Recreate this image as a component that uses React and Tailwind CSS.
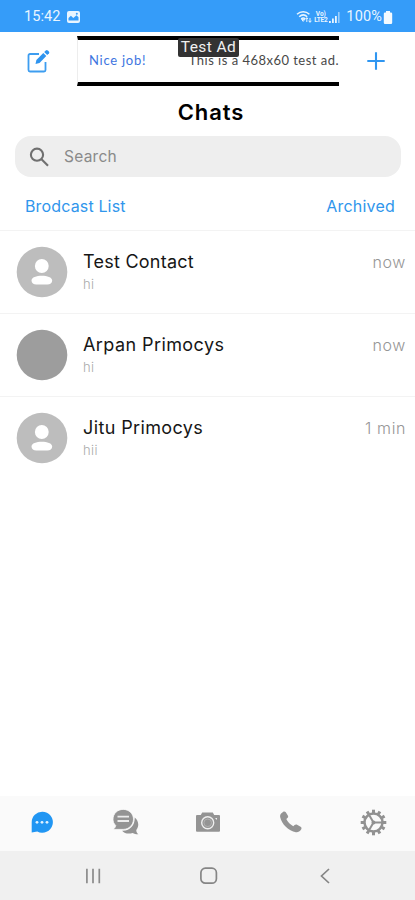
import React from "react";

const chats = [
  { name: "Test Contact", nameClass: "tracking-[0.25px]", text: "hi", time: "now", photo: false },
  { name: "Arpan Primocys", nameClass: "tracking-[0.42px]", text: "hi", time: "now", photo: true },
  { name: "Jitu Primocys", nameClass: "tracking-[0.38px]", text: "hii", time: "1 min", photo: false },
];

const teeth = [0, 30, 60, 90, 120, 150, 180, 210, 240, 270, 300, 330];
const spokes = [60, 180, 300];

function StatusBar() {
  return (
    <div className="flex h-8 shrink-0 items-center justify-between bg-[#359cf9] pl-6 pr-[22px] pt-[2px] font-[Roboto,sans-serif] text-[14.5px] text-[#e9f5ff]">
      <div className="flex items-center gap-[6px]">
        <span className="tracking-[0.1px]">15:42</span>
        <svg width="13" height="12" viewBox="0 0 13 12">
          <rect width="13" height="12" rx="2" fill="#e9f5ff" />
          <path d="M1.5 9.5V7l2.4-2.2L6.3 7l3.2-2.7 2 2v3.2Z" fill="#359cf9" />
          <circle cx="9.8" cy="2.8" r="1" fill="#359cf9" />
        </svg>
      </div>
      <div className="flex items-center">
        <svg width="17" height="14" viewBox="0 0 17 14" fill="none" stroke="#e9f5ff" strokeWidth="1.5">
          <path d="M1 4.2C4.6 .8 9.8.8 13.4 4.2M3.2 6.7c2.4-2.2 5.6-2.2 8 0M5.2 8.9c1.3-1.1 2.7-1.1 4 0" />
          <path d="m5.700 9.400 1.500 2 1.500-2ZM10.800 12V7.800m-1.500 1.500 1.500-1.600L12 9m2-1v4.200m-1.400-1.500 1.400 1.600 1.500-1.600" strokeWidth="1" />
        </svg>
        <div className="flex w-[15px] flex-col items-center text-[6.5px] font-bold leading-[6.5px]">
          <span>Vo)</span>
          <span className="tracking-[-0.3px]">LTE2</span>
        </div>
        <svg className="ml-px mr-[5px]" width="12" height="12" viewBox="0 0 12 12" fill="#e9f5ff">
          <path d="M0 10h1.800v2H0ZM3 7.500h1.800V12H3ZM6 5h1.800v7H6Z" />
          <path d="M9 1h1.600v11H9Z" opacity=".55" />
        </svg>
        <span className="tracking-[0.15px]">100%</span>
        <svg className="ml-px" width="10" height="13" viewBox="0 0 10 13" fill="#f4faff">
          <path d="M3 0h4v1.500h1A1.200 1.200 0 0 1 9.200 2.700v9A1.300 1.300 0 0 1 8 13H2A1.300 1.300 0 0 1 .8 11.700v-9A1.200 1.200 0 0 1 2 1.500h1Z" />
        </svg>
      </div>
    </div>
  );
}

function Header() {
  return (
    <div className="flex h-[60px] shrink-0 items-start">
      <svg className="ml-[26px] mt-[17px]" width="25" height="24" viewBox="0 0 25 24">
        <path d="M13 5H4A1.500 1.500 0 0 0 2.500 6.500V21a1.500 1.500 0 0 0 1.500 1.500H18a1.500 1.500 0 0 0 1.500-1.500v-8" fill="none" stroke="#3d9df0" strokeWidth="1.800" />
        <path d="m9.500 14.900.9-4L17.300 4l3 3-6.800 6.900Z" fill="#2e94ef" />
        <path d="m18.200 3.100 1.700-1.700a1.300 1.300 0 0 1 1.800 0l1.200 1.200a1.300 1.300 0 0 1 0 1.800l-1.700 1.700Z" fill="#2e94ef" />
      </svg>
      <div className="relative ml-[26px] mt-[4px] flex h-[50px] w-[262px] items-center justify-between border-y-4 border-l border-y-black border-l-[#ededed] pl-[11px] font-[Lato,sans-serif] text-[13px]">
        <span className="tracking-[0.75px] text-[#3d75df]">Nice job!</span>
        <span className="tracking-[0.48px] text-[#484848]">This is a 468x60 test ad.</span>
        <div className="absolute left-[100px] top-[-2px] flex h-[19px] w-[61px] items-center justify-center rounded-[2px] bg-[#333] font-[Roboto,sans-serif] text-[15.500px] tracking-[0.4px] text-[#f1f1f1]">
          Test Ad
        </div>
      </div>
      <svg className="ml-7 mt-5" width="18" height="18" viewBox="0 0 18 18">
        <path d="M9 .3v17.400M.3 9h17.400" stroke="#2f96f1" strokeWidth="2.100" />
      </svg>
    </div>
  );
}

function Avatar({ photo }) {
  return (
    <svg className="ml-4 mt-[15px] shrink-0" width="52" height="52" viewBox="0 0 52 52">
      <circle cx="26" cy="26" r="25.300" fill={photo ? "#9d9d9d" : "#bdbdbd"} />
      {!photo && (
        <g fill="#fff">
          <circle cx="25.800" cy="20" r="6.900" />
          <path d="M15.500 34.500c0-3.300 5-4.800 10.300-4.800s10.400 1.500 10.400 4.800c0 2.800-2.200 4-4.800 4H20.300c-2.600 0-4.800-1.200-4.800-4Z" />
        </g>
      )}
    </svg>
  );
}

function ChatRow({ chat }) {
  return (
    <li className="flex h-[83px] border-t border-[#f3f3f3]">
      <Avatar photo={chat.photo} />
      <div className="ml-[15px] flex flex-1 flex-col pt-[18px]">
        <span className={"text-[18px] leading-[26px] text-[#161616] " + chat.nameClass}>{chat.name}</span>
        <span className="text-[13px] font-light leading-[18px] tracking-[0.4px] text-[#aaa]">{chat.text}</span>
      </div>
      <span className="mr-[9px] pt-[20px] text-[16px] font-light leading-[22px] tracking-[0.6px] text-[#969696]">{chat.time}</span>
    </li>
  );
}

function TabBar() {
  return (
    <nav className="grid h-[55px] shrink-0 grid-cols-5 place-items-center bg-[#fafafa] pb-[3px]">
      <svg width="26" height="26" viewBox="0 0 26 26">
        <path d="M13.300 2.700a10.500 10.500 0 1 1-5 19.700l-5.600 1v-10.200A10.500 10.500 0 0 1 13.300 2.700Z" fill="#2196f3" />
        <g fill="#e1f2ff">
          <circle cx="8" cy="13.300" r="1.400" />
          <circle cx="13" cy="13.300" r="1.400" />
          <circle cx="18" cy="13.300" r="1.400" />
        </g>
      </svg>
      <svg width="28" height="28" viewBox="0 0 28 28">
        <path d="M23.700 9.500c4.200 3.200 4.600 9 1.600 12.500-.1 1.900.7 3.200 2.100 4.300-2.100.1-4.100-.4-5.800-1.300-4.300 1.400-8.300.3-10.500-2.300 8 .5 13-5.500 12.600-13.200Z" fill="#949494" />
        <path d="M12.200 1.400c5.700 0 10.300 4.200 10.300 9.800s-4.600 10.200-10.300 10.200H2c1.500-1 2.500-2.200 2.700-4C2.700 15.700 2 13.600 2 11.200c0-5.600 4.500-9.800 10.200-9.800Z" fill="#949494" stroke="#fafafa" strokeWidth=".8" />
        <path d="M6.500 8.600h11.500M6.500 13h11.500" stroke="#ececec" strokeWidth="1.900" />
      </svg>
      <svg width="26" height="26" viewBox="0 0 26 26">
        <path d="M2 6h3.800l1.400-2.500h10.600L19.200 6H24a1 1 0 0 1 1 1v14.700a1 1 0 0 1-1 1H2a1 1 0 0 1-1-1V7a1 1 0 0 1 1-1Z" fill="#949494" />
        <circle cx="12.700" cy="13.800" r="6" fill="none" stroke="#efefef" strokeWidth="1.400" />
        <circle cx="12.700" cy="13.800" r="3.800" fill="none" stroke="#b8b8b8" strokeWidth=".8" />
        <path d="m20 9 2 2v-2Z" fill="#efefef" />
      </svg>
      <svg width="26" height="26" viewBox="0 0 26 26">
        <path d="M3.100 4.500 5 2.900c1-.7 2.100-.5 2.800.4l2 3.100c.6.900.5 2-.4 2.700L8.300 10.100c1.600 3.200 4 5.600 7 7.200l1.300-1.200c.8-.7 1.600-.8 2.500-.3l3.500 2c1 .6 1.200 1.700.5 2.700-1.400 1.900-3.200 3.100-5.200 2.700C10.500 21.900 3.700 15.200 2.200 8.300 1.900 6.800 2.200 5.400 3.100 4.500Z" fill="#949494" />
      </svg>
      <svg width="27" height="27" viewBox="-13.500 -13.500 27 27" fill="none" stroke="#919191">
        <circle r="9" strokeWidth="2.500" />
        {teeth.map((angle) => (
          <path key={angle} d="M0-9.500V-12.800" strokeWidth="3" transform={`rotate(${angle})`} />
        ))}
        {spokes.map((angle) => (
          <path key={angle} d="M0 0H8.500" strokeWidth="2" transform={`rotate(${angle + 60})`} />
        ))}
        <circle r="2" fill="#919191" stroke="none" />
      </svg>
    </nav>
  );
}

function SystemNav() {
  return (
    <div className="flex h-[49px] shrink-0 items-center justify-between bg-[#f0f0f0] pl-[84px] pr-[81px]">
      <svg width="18" height="18" viewBox="0 0 18 18">
        <path d="M2.900 1.800v14.500M9 1.800v14.500M15.300 1.800v14.500" stroke="#8b8b8b" strokeWidth="1.700" />
      </svg>
      <svg width="18" height="18" viewBox="0 0 18 18">
        <rect x=".9" y="1.200" width="15.500" height="15" rx="4.500" fill="none" stroke="#858585" strokeWidth="1.700" />
      </svg>
      <svg width="18" height="18" viewBox="0 0 18 18">
        <path d="m13 2-7.500 7 7.500 7" fill="none" stroke="#858585" strokeWidth="1.700" />
      </svg>
    </div>
  );
}

export default function App() {
  return (
    <div className="flex h-[900px] w-[415px] flex-col overflow-hidden bg-white font-[Inter,sans-serif]">
      <StatusBar />
      <Header />
      <h1 className="h-11 shrink-0 pl-[7px] text-center text-[22px] font-semibold leading-[40px] tracking-[0.9px] text-black">Chats</h1>
      <div className="ml-[15px] flex h-[41px] w-[386px] shrink-0 items-center rounded-[16px] bg-[#eee] pl-[14px]">
        <svg width="20" height="20" viewBox="0 0 20 20" fill="none" stroke="#707070" strokeWidth="2.100">
          <circle cx="8" cy="7.700" r="6.100" />
          <path d="m12.500 12.200 6.500 6.500" />
        </svg>
        <span className="ml-[15px] text-[15.500px] tracking-[0.25px] text-[#8a8a8a]">Search</span>
      </div>
      <div className="flex h-[53px] shrink-0 items-center justify-between pl-[25px] pr-5 pt-[5px] text-[16px] text-[#3096ec]">
        <span className="tracking-[0.15px]">Brodcast List</span>
        <span className="tracking-[0.2px]">Archived</span>
      </div>
      <ul className="flex-1">
        {chats.map((chat) => (
          <ChatRow key={chat.name} chat={chat} />
        ))}
      </ul>
      <TabBar />
      <SystemNav />
    </div>
  );
}
